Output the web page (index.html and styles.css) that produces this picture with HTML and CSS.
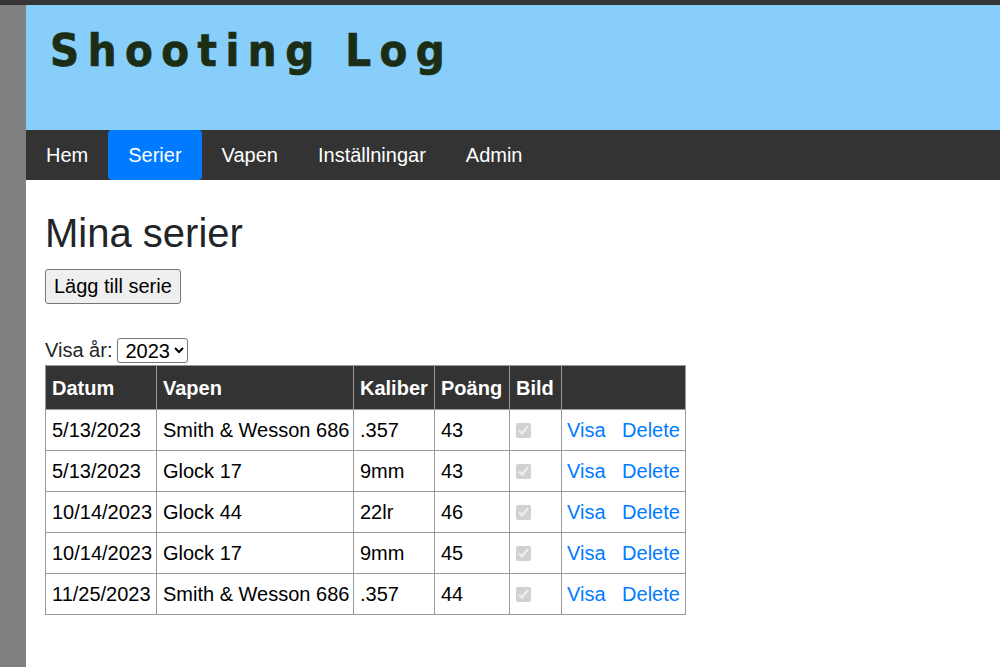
FILE: index.html
```html
<!DOCTYPE html>
<html lang="sv">
<head>
    <meta charset="UTF-8">
    <meta name="viewport" content="width=device-width, initial-scale=1.0">
    <title>Shooting Log - Mina serier</title>
    <link rel="stylesheet" href="styles.css">
</head>
<body>
    <div class="page">
        <header class="top">
            <h1 class="logo">Shooting Log</h1>
        </header>
        <nav class="menu">
            <a href="#">Hem</a>
            <a href="#" class="active">Serier</a>
            <a href="#">Vapen</a>
            <a href="#">Inställningar</a>
            <a href="#">Admin</a>
        </nav>
        <main class="content">
            <h2>Mina serier</h2>
            <button class="btn">Lägg till serie</button>
            <div class="year">
                <label for="year">Visa år:</label>
                <select id="year">
                    <option>2023</option>
                    <option>2022</option>
                </select>
            </div>
            <table class="series">
                <colgroup>
                    <col class="c-date">
                    <col class="c-gun">
                    <col class="c-cal">
                    <col class="c-pts">
                    <col class="c-img">
                    <col class="c-act">
                </colgroup>
                <thead>
                    <tr>
                        <th>Datum</th>
                        <th>Vapen</th>
                        <th>Kaliber</th>
                        <th>Poäng</th>
                        <th>Bild</th>
                        <th></th>
                    </tr>
                </thead>
                <tbody>
                    <tr>
                        <td>5/13/2023</td>
                        <td>Smith &amp; Wesson 686</td>
                        <td>.357</td>
                        <td>43</td>
                        <td><input type="checkbox" checked disabled></td>
                        <td><a href="#">Visa</a> <a href="#" class="del">Delete</a></td>
                    </tr>
                    <tr>
                        <td>5/13/2023</td>
                        <td>Glock 17</td>
                        <td>9mm</td>
                        <td>43</td>
                        <td><input type="checkbox" checked disabled></td>
                        <td><a href="#">Visa</a> <a href="#" class="del">Delete</a></td>
                    </tr>
                    <tr>
                        <td>10/14/2023</td>
                        <td>Glock 44</td>
                        <td>22lr</td>
                        <td>46</td>
                        <td><input type="checkbox" checked disabled></td>
                        <td><a href="#">Visa</a> <a href="#" class="del">Delete</a></td>
                    </tr>
                    <tr>
                        <td>10/14/2023</td>
                        <td>Glock 17</td>
                        <td>9mm</td>
                        <td>45</td>
                        <td><input type="checkbox" checked disabled></td>
                        <td><a href="#">Visa</a> <a href="#" class="del">Delete</a></td>
                    </tr>
                    <tr>
                        <td>11/25/2023</td>
                        <td>Smith &amp; Wesson 686</td>
                        <td>.357</td>
                        <td>44</td>
                        <td><input type="checkbox" checked disabled></td>
                        <td><a href="#">Visa</a> <a href="#" class="del">Delete</a></td>
                    </tr>
                </tbody>
            </table>
        </main>
    </div>
</body>
</html>
```

FILE: styles.css
```css
html, body { margin: 0; height: 100%; }
body { background: #808080; border-top: 5px solid #353535; box-sizing: border-box; font-family: "Liberation Sans", Arial, sans-serif; font-size: 20px; color: #212529; }
.page { margin-left: 26px; min-height: 100%; background: #fff; }
.top { height: 125px; box-sizing: border-box; padding: 23px 24px 0; background: #87cefa; }
.logo { margin: 0; font-family: "DejaVu Sans", sans-serif; font-stretch: condensed; font-size: 45px; line-height: 1; font-weight: bold; letter-spacing: 8.5px; color: #1b2e15; -webkit-text-stroke: 0.7px #1b2e15; }
.menu { display: flex; height: 50px; background: #333; }
.menu a { display: block; padding: 13px 20px; line-height: 24px; color: #fff; text-decoration: none; border-radius: 4px; }
.menu a.active { background: #007bff; }
.content { padding: 29px 19px 20px; }
.content h2 { margin: 0 0 12px; font-size: 40px; font-weight: normal; line-height: 48px; }
.btn { font: inherit; color: #000; padding: 5px 8px; line-height: 23px; background: #efefef; border: 1px solid #767676; border-radius: 3px; }
.year { display: flex; align-items: center; gap: 5px; height: 27px; margin-top: 33px; }
.year select { font: inherit; color: #000; height: 25px; width: 71px; padding: 0 0 0 3px; border: 1px solid #767676; border-radius: 3px; background: #fff; }
.series { border-collapse: collapse; table-layout: fixed; width: 640px; margin-top: 1px; color: #000; }
.c-date { width: 111px; }
.c-gun { width: 197px; }
.c-cal { width: 81px; }
.c-pts { width: 75px; }
.c-img { width: 52px; }
.c-act { width: 124px; }
.series th, .series td { border: 1px solid #999; padding: 8px 6px; line-height: 24px; text-align: left; white-space: nowrap; overflow: hidden; }
.series th { background: #333; color: #fff; padding: 10px 6px 9px; }
.series input { margin: 0; width: 15px; height: 15px; vertical-align: -1px; }
.series td:last-child { padding-left: 5px; }
.series a { color: #007bff; text-decoration: none; }
.series a.del { margin-left: 11px; }
```
